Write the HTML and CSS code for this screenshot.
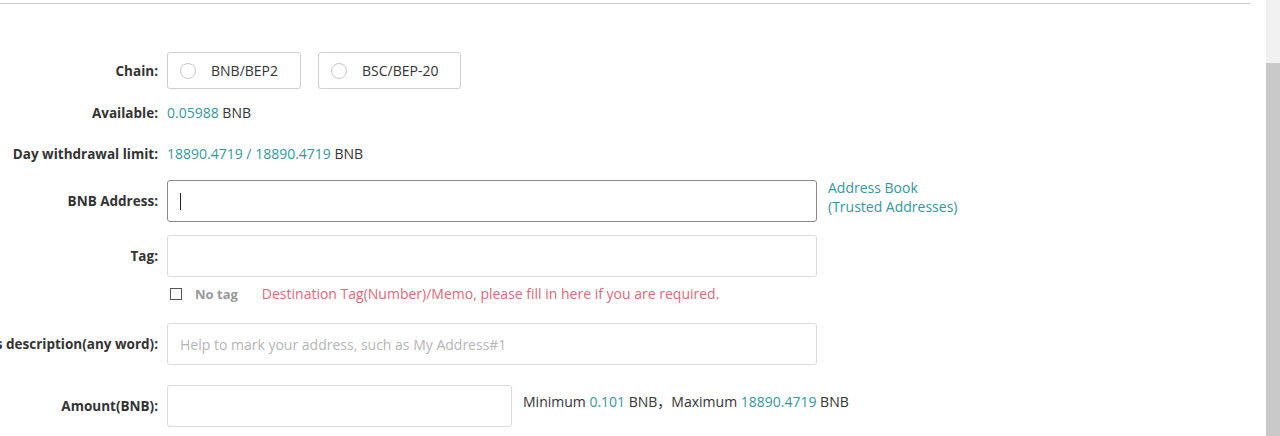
FILE: index.html
```html
<!DOCTYPE html>
<html lang="en">
<head>
<meta charset="utf-8">
<title>Withdraw BNB</title>
<link rel="stylesheet" href="styles.css">
</head>
<body>
<div class="page">
  <main class="main">
    <div class="top-rule"></div>
    <form class="form">
      <div class="row row-chain">
        <div class="label">Chain:</div>
        <div class="field chains">
          <label class="chain"><span class="radio"></span><span>BNB/BEP2</span></label>
          <label class="chain"><span class="radio"></span><span>BSC/BEP-20</span></label>
        </div>
      </div>
      <div class="row row-text row-available">
        <div class="label">Available:</div>
        <div class="field"><span><span class="teal">0.05988</span> BNB</span></div>
      </div>
      <div class="row row-text row-limit">
        <div class="label">Day withdrawal limit:</div>
        <div class="field"><span><span class="teal">18890.4719 / 18890.4719</span> BNB</span></div>
      </div>
      <div class="row row-input row-address">
        <div class="label">BNB Address:</div>
        <div class="field field-input">
          <div class="input input-wide input-focus"><span class="caret"></span></div>
          <a class="book">Address Book<br>(Trusted Addresses)</a>
        </div>
      </div>
      <div class="row row-input row-tag">
        <div class="label">Tag:</div>
        <div class="field field-input">
          <div class="input input-wide"></div>
        </div>
      </div>
      <div class="row row-text row-notag">
        <div class="label"></div>
        <div class="field notag">
          <span class="checkbox"></span>
          <span class="notag-label">No tag</span>
          <span class="warn">Destination Tag(Number)/Memo, please fill in here if you are required.</span>
        </div>
      </div>
      <div class="row row-input row-desc">
        <div class="label">Address description(any word):</div>
        <div class="field field-input">
          <div class="input input-wide"><span class="placeholder">Help to mark your address, such as My Address#1</span></div>
        </div>
      </div>
      <div class="row row-input row-amount">
        <div class="label">Amount(BNB):</div>
        <div class="field field-input">
          <div class="input input-amount"></div>
          <div class="limits">Minimum <span class="teal">0.101</span> BNB，Maximum <span class="teal">18890.4719</span> BNB</div>
        </div>
      </div>
    </form>
  </main>
  <div class="scrollbar"><div class="thumb"></div></div>
</div>
</body>
</html>
```
FILE: styles.css
```css
* { box-sizing: border-box; }
html, body { margin: 0; padding: 0; background: #fff; }
body {
  font-family: "Open Sans", "Noto Sans CJK SC", sans-serif;
  font-size: 14px;
  color: #333;
  overflow: hidden;
}
.page { display: flex; height: 436px; }
.main { flex: 1; min-width: 0; }
.top-rule { width: 1250px; height: 4px; border-bottom: 1px solid #c9c9c9; }
.form { display: flex; flex-direction: column; }
.row { display: flex; align-items: center; }
.label {
  width: 158px;
  flex: none;
  margin-right: 9px;
  display: flex;
  justify-content: flex-end;
  white-space: nowrap;
  font-weight: 700;
  font-size: 13.5px;
  color: #333;
}
.field { display: flex; align-items: center; white-space: nowrap; }
.teal { color: #35979a; }
.row-text { height: 20px; line-height: 20px; }

.row-chain { margin-top: 48px; height: 37px; }
.chains { gap: 17px; }
.chain {
  display: flex; align-items: center;
  height: 37px;
  padding: 0 22px 0 12px;
  border: 1px solid #cfcfcf;
  border-radius: 3px;
  gap: 15px;
  color: #333;
}
.radio {
  width: 16px; height: 16px;
  border: 1px solid #c8c8c8;
  border-radius: 50%;
  flex: none;
}
.row-available { margin-top: 14px; }
.row-limit { margin-top: 21px; }
.row-input { height: 42px; }
.row-address { margin-top: 16px; }
.row-tag { margin-top: 13px; }
.row-notag { margin-top: 7px; }
.row-desc { margin-top: 19px; }
.row-amount { margin-top: 20px; }
.field-input { align-items: center; height: 42px; }
.input {
  height: 42px;
  border: 1px solid #dcdcdc;
  border-radius: 3px;
  display: flex; align-items: center;
  padding: 0 12px;
  background: #fff;
}
.input-wide { width: 650px; }
.input-amount { width: 345px; }
.input-focus { border-color: #8a8a8a; }
.caret { width: 1px; height: 17px; background: #222; }
.book {
  align-self: flex-start;
  margin-left: 11px;
  margin-top: -2px;
  color: #35979a;
  line-height: 19px;
}
.placeholder { color: #b5b5b5; }
.checkbox {
  width: 12px; height: 12px;
  border: 1px solid #555;
  margin-left: 3px;
  margin-right: 13px;
}
.notag-label { color: #999; font-weight: 700; font-size: 13px; margin-right: 24px; }
.warn { color: #e0687a; }
.limits { margin-left: 11px; margin-top: -10px; color: #333; }

.scrollbar {
  width: 14px; flex: none;
  background: #f1f1f1;
  display: flex; flex-direction: column;
  padding-top: 63px;
}
.thumb { flex: 1; background: #c9c9c9; }
```
